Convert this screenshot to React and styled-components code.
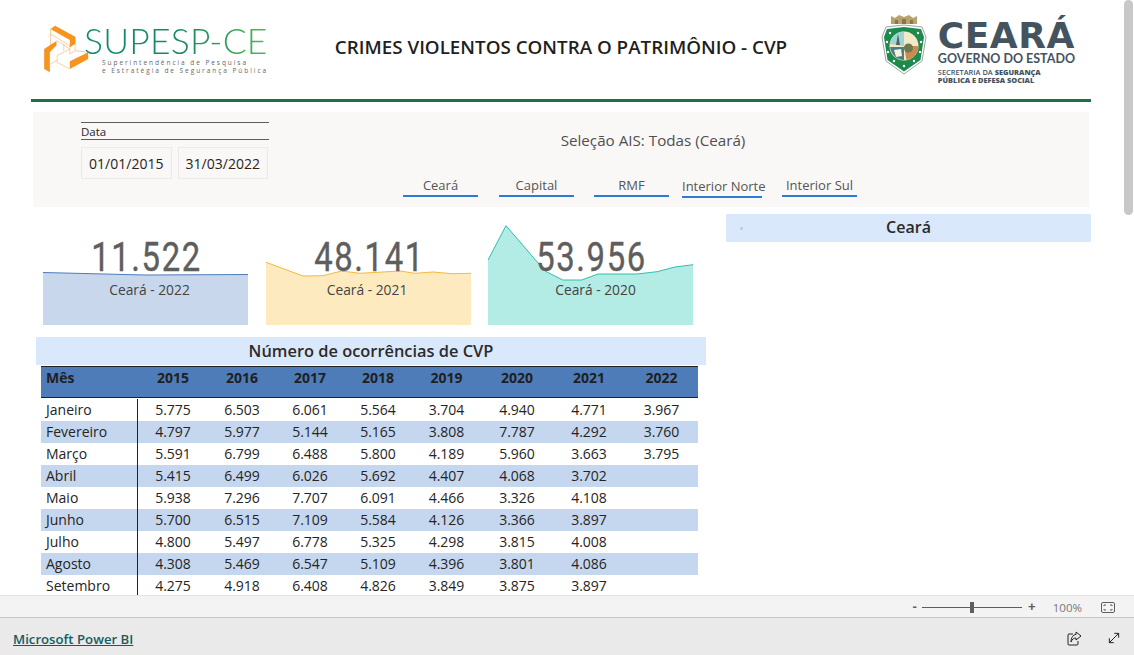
import styled, { createGlobalStyle } from "styled-components";
import { MoveDiagonal } from "lucide-react";

const GlobalStyle = createGlobalStyle`
    html, body, #root {
        margin: 0;
        height: 100%;
    }

    body {
        font-family: "Open Sans", "Noto Sans", sans-serif;
        color: #252423;
        overflow: hidden;
    }

    * {
        box-sizing: border-box;
    }
`;

const Page = styled.div`
    display: flex;
    flex-direction: column;
    height: 100vh;
`;

const ReportView = styled.main`
    position: relative;
    flex: 1;
    min-height: 0;
    overflow: hidden;
    background: #fff;
`;

const ScrollThumb = styled.div`
    position: absolute;
    top: 0;
    right: 1px;
    width: 9px;
    height: 215px;
    border-radius: 5px;
    background: #c8c8c8;
`;

const Report = styled.div`
    width: 1124px;
    padding: 0 33px 0 31px;
`;

const Header = styled.header`
    display: grid;
    grid-template-columns: 1fr 1fr 1fr;
    height: 102px;
    border-bottom: 3px solid #1d7144;
    align-items: center;
`;

const HeaderTitle = styled.h1`
    margin: 0 0 6px;
    font-size: 18.8px;
    font-weight: 600;
    white-space: nowrap;
    justify-self: center;
    color: #1f1f1f;
`;

const SupespLogo = styled.div`
    display: flex;
    align-items: center;
    padding-left: 12px;
    margin-top: -2px;
`;

const SupespText = styled.div`
    display: flex;
    flex-direction: column;
    margin-left: -6px;
`;

const SupespName = styled.span`
    font-family: "Lato", sans-serif;
    font-weight: 300;
    font-size: 35.5px;
    line-height: 37px;
    letter-spacing: 0.2px;
    white-space: nowrap;
    background: linear-gradient(90deg, #0f8a73 0%, #148a5c 55%, #4cb957 100%);
    -webkit-background-clip: text;
    background-clip: text;
    color: transparent;
`;

const SupespSub = styled.span`
    font-size: 6.5px;
    line-height: 8.5px;
    letter-spacing: 1.95px;
    margin-left: 18px;
    white-space: nowrap;
    color: #666;
`;

const CearaLogo = styled.div`
    display: flex;
    justify-self: end;
    align-items: flex-start;
    gap: 11px;
    padding-right: 16px;
    margin-bottom: 1px;
`;

const CearaText = styled.div`
    display: flex;
    flex-direction: column;
    color: #44545f;
`;

const CearaName = styled.span`
    font-family: "DejaVu Sans", sans-serif;
    font-weight: 700;
    font-size: 36px;
    line-height: 33px;
    letter-spacing: 0.5px;
    margin-top: 5px;
`;

const CearaGov = styled.span`
    font-family: "Lato", sans-serif;
    font-weight: 700;
    font-size: 12.5px;
    line-height: 14px;
    white-space: nowrap;
`;

const CearaSub = styled.span`
    font-size: 7.4px;
    line-height: 8px;
    font-weight: 600;
    white-space: nowrap;
    margin-top: ${props => props.$first ? "2px" : "0"};

    & b {
        font-weight: 800;
    }
`;

const FilterPanel = styled.section`
    display: flex;
    height: 95px;
    width: 1056px;
    margin: 10px 0 7px 2px;
    padding: 10px 0 0 48px;
    background: #faf8f6;
`;

const DateSlicer = styled.div`
    width: 188px;
`;

const SlicerLabel = styled.div`
    height: 18px;
    border-top: 1px solid #605e5c;
    border-bottom: 1px solid #605e5c;
    font-size: 11.5px;
    line-height: 18px;
`;

const DateRow = styled.div`
    display: flex;
    gap: 6px;
    margin-top: 7px;
`;

const DateBox = styled.div`
    width: 90.5px;
    height: 32px;
    border: 1px solid #eaeaea;
    font-size: 14px;
    line-height: 32px;
    text-align: center;
    color: #252423;
`;

const Selection = styled.div`
    width: 500px;
    margin-left: 134px;
`;

const SelectionTitle = styled.div`
    margin-top: 8px;
    font-size: 15.2px;
    line-height: 20px;
    text-align: center;
    color: #4f4f4f;
`;

const Tabs = styled.div`
    display: flex;
    margin-top: 26px;
`;

const Tab = styled.div`
    width: ${props => props.$width || 75}px;
    margin-right: ${props => props.$gap || 0}px;
    margin-top: ${props => props.$drop ? "1px" : "0"};
    height: 21px;
    border-bottom: 2px solid #2b7cd3;
    font-size: 13px;
    line-height: 18px;
    text-align: center;
    white-space: nowrap;
    color: #555;
`;

const Columns = styled.div`
    display: flex;
    align-items: flex-start;
`;

const LeftColumn = styled.div`
    width: 675px;
`;

const RightColumn = styled.div`
    width: 365px;
    margin-left: 20px;
`;

const RegionBar = styled.div`
    position: relative;
    height: 28px;
    background: #dae8fc;
    font-size: 16px;
    font-weight: 600;
    line-height: 27px;
    text-align: center;
    color: #2b2b2b;
`;

const RegionDot = styled.span`
    position: absolute;
    left: 14px;
    top: 13px;
    width: 3px;
    height: 3px;
    border-radius: 50%;
    background: #c2c8d2;
`;

const Cards = styled.div`
    display: flex;
    height: 111px;
    padding: 1px 0 0 12px;
`;

const Card = styled.div`
    position: relative;
    width: 205px;
    height: 110px;
    margin-right: ${props => props.$gap}px;
`;

const CardChart = styled.svg`
    display: block;
`;

const CardValue = styled.div`
    position: absolute;
    left: 0;
    right: 0;
    top: 18px;
    font-family: "Roboto", sans-serif;
    font-size: 40px;
    line-height: 50px;
    letter-spacing: 2px;
    text-align: center;
    color: #605e5c;
    -webkit-text-stroke: 0.4px #605e5c;
    transform: translateX(1px) scaleX(0.82);
`;

const CardLabel = styled.div`
    position: absolute;
    left: 0;
    right: 0;
    top: 65px;
    font-size: 13.8px;
    line-height: 19px;
    text-align: center;
    color: #444;
    transform: translateX(${props => props.$shift}px);
`;

const TableTitle = styled.div`
    height: 28px;
    margin: 12px 0 0 5px;
    width: 670px;
    background: #dae8fc;
    font-size: 16.4px;
    font-weight: 600;
    line-height: 27px;
    text-align: center;
    color: #2b2b2b;
`;

const Table = styled.div`
    width: 657px;
    margin: 1px 0 0 10px;
    font-size: 14px;
`;

const COLUMNS = "97px 70px 68px 68px 68px 69px 72px 72px 73px";

const HeadRow = styled.div`
    display: grid;
    grid-template-columns: ${COLUMNS};
    height: 32px;
    margin-bottom: 1px;
    background: #4d7cb8;
    border-top: 1px solid #222;
    border-bottom: 1px solid #222;
    font-weight: 700;
    line-height: 22px;
    color: #1f1f1f;
`;

const Row = styled.div`
    display: grid;
    grid-template-columns: ${COLUMNS};
    height: 22px;
    line-height: 22px;
    background: ${props => props.$striped ? "#c5d7ef" : "#fff"};
    color: #252423;
`;

const MonthCell = styled.div`
    padding-left: 5px;
    border-right: ${props => props.$head ? "0" : "1px solid #222"};
`;

const Cell = styled.div`
    text-align: center;
`;

const StatusBar = styled.div`
    display: flex;
    align-items: center;
    justify-content: flex-end;
    height: 23px;
    padding: 1px 19px 0 0;
    background: #f3f3f3;
    border-top: 1px solid #e3e3e3;
    border-bottom: 1px solid #c8c8c8;
    color: #605e5c;
`;

const ZoomSign = styled.span`
    font-family: "Liberation Sans", sans-serif;
    font-size: 13px;
    font-weight: 700;
    line-height: 20px;
    width: 10px;
    text-align: center;
`;

const ZoomTrack = styled.div`
    position: relative;
    width: 100px;
    height: 1px;
    margin: 0 5px 0 2px;
    background: #605e5c;
`;

const ZoomThumb = styled.span`
    position: absolute;
    left: 48px;
    top: -5px;
    width: 4px;
    height: 11px;
    background: #605e5c;
`;

const ZoomValue = styled.span`
    margin: 0 19px 0 16px;
    font-size: 11.5px;
    color: #777;
`;

const Footer = styled.footer`
    display: flex;
    align-items: center;
    justify-content: space-between;
    height: 37px;
    padding: 4px 12px 0 13px;
    background: #eaeaea;
`;

const PowerBiLink = styled.a`
    font-size: 13.2px;
    font-weight: 600;
    color: #0f5f63;
    text-decoration: underline;
`;

const FooterIcons = styled.div`
    display: flex;
    align-items: center;
    gap: 24px;
    margin-top: -1px;
    color: #252423;
`;

const months = [
    ["Janeiro", "5.775", "6.503", "6.061", "5.564", "3.704", "4.940", "4.771", "3.967"],
    ["Fevereiro", "4.797", "5.977", "5.144", "5.165", "3.808", "7.787", "4.292", "3.760"],
    ["Março", "5.591", "6.799", "6.488", "5.800", "4.189", "5.960", "3.663", "3.795"],
    ["Abril", "5.415", "6.499", "6.026", "5.692", "4.407", "4.068", "3.702", ""],
    ["Maio", "5.938", "7.296", "7.707", "6.091", "4.466", "3.326", "4.108", ""],
    ["Junho", "5.700", "6.515", "7.109", "5.584", "4.126", "3.366", "3.897", ""],
    ["Julho", "4.800", "5.497", "6.778", "5.325", "4.298", "3.815", "4.008", ""],
    ["Agosto", "4.308", "5.469", "6.547", "5.109", "4.396", "3.801", "4.086", ""],
    ["Setembro", "4.275", "4.918", "6.408", "4.826", "3.849", "3.875", "3.897", ""],
];

const years = ["2015", "2016", "2017", "2018", "2019", "2020", "2021", "2022"];

const cards = [
    {
        value: "11.522",
        label: "Ceará - 2022",
        line: "#4d7cb8",
        fill: "#c8d7ec",
        gap: 18,
        shift: 4,
        points: "0,57.5 102,60 205,59.5",
    },
    {
        value: "48.141",
        label: "Ceará - 2021",
        line: "#f5b93f",
        fill: "#fdeabf",
        gap: 17,
        shift: -1.5,
        points: "0,47.3 37,61 57,60.7 75.7,56 94,58.3 134,56 149,58.3 167,57 186,58.7 205,58.3",
    },
    {
        value: "53.956",
        label: "Ceará - 2020",
        line: "#2fbfae",
        fill: "#b3ebe5",
        gap: 0,
        shift: 5,
        points: "0,45 18,10.7 57,56 74.7,65 93.7,65 110,59 149,59 169,56.7 187,52 205,49.7",
    },
];

function KnotIcon() {
    return (
        <svg width="47" height="50" viewBox="40 70 140 150">
            <g fill="none" stroke="#f9b778" strokeWidth="2">
                <path d="M62 85 62 135 M62 100 120 135 120 160 M136 108 136 150 120 160 M82 120 60 135 M82 120 120 145 M82 165 120 145 M82 165 82 185 120 205 M102 130 102 150 M62 190 82 178 M136 150 175 155" />
            </g>
            <path fill="#f7931e" d="M62 85 76 75 136 108 136 130 120 140 120 118Z" />
            <path fill="#f7931e" d="M43 145 60 134 80 122 80 134 60 155 60 215 43 205Z" />
            <path fill="#f7931e" d="M120 182 175 155 175 175 120 205Z" />
        </svg>
    );
}

function CrestIcon() {
    return (
        <svg width="46" height="61" viewBox="0 0 46 61">
            <path fill="#b9a36c" d="M10 10 10 2 14 4 18 1 23 3 28 1 32 4 36 2 36 10Z" />
            <path fill="#8a7748" d="M14 6h3v4h-3zM21 5h4v5h-4zM29 6h3v4h-3z" />
            <path fill="#fff" stroke="#9aa5a0" strokeWidth="1" d="M23 11 41 13 45 23 41 47 23 60 5 47 1 23 5 13Z" />
            <path fill="#1c8a4c" d="M23 13 40 15 43 23 39.5 46 23 57.5 6.5 46 3 23 6 15Z" />
            <circle cx="23" cy="32" r="14.5" fill="#f3e9c6" />
            <path fill="#9ed3d8" d="M9 30a14.500 14.500 0 0 1 14 -12.500v14.500Z" />
            <path fill="#c98b4f" d="M23 32h14.500a14.500 14.500 0 0 1 -12 14.300Z" />
            <path fill="#6a7a50" d="M23 34a4.500 4.500 0 1 1 9 0a4.500 4.500 0 1 1 -9 0Z" />
            <path fill="#4d7f80" d="M9 33h14v13a14.500 14.500 0 0 1 -14 -13Z" />
            <path fill="#f4f1e4" d="M13 36l7 -1 1 7 -6 1Z" />
            <path fill="#55625a" d="M15 31 17 20 19 31Z" />
            <g fill="#fff">
                <circle cx="9" cy="19" r="1.200" />
                <circle cx="6" cy="28" r="1.200" />
                <circle cx="7" cy="38" r="1.200" />
                <circle cx="13" cy="47" r="1.200" />
                <circle cx="23" cy="52" r="1.200" />
                <circle cx="33" cy="47" r="1.200" />
                <circle cx="39" cy="38" r="1.200" />
                <circle cx="40" cy="28" r="1.200" />
                <circle cx="37" cy="19" r="1.200" />
            </g>
        </svg>
    );
}

function FitIcon() {
    return (
        <svg width="14" height="11" viewBox="0 0 14 11" fill="none" stroke="#605e5c">
            <rect x="0.500" y="0.500" width="13" height="10" rx="1.500" />
            <path d="M3 4V3h2M11 4V3H9M3 7v1h2M11 7v1H9" />
        </svg>
    );
}

function ShareIcon() {
    return (
        <svg width="15" height="15" viewBox="0 0 15 15" fill="none" stroke="#252423">
            <path d="M6 3H2a1 1 0 0 0-1 1v9a1 1 0 0 0 1 1h8a1 1 0 0 0 1-1v-3" />
            <path d="M9 1l5 4-5 4V7C7 7 5 8 4 11 4 7 6 3.500 9 3.500Z" />
        </svg>
    );
}

export default function App() {
    return (
        <Page>
            <GlobalStyle />
            <ReportView>
                <Report>
                    <Header>
                        <SupespLogo>
                            <KnotIcon />
                            <SupespText>
                                <SupespName>SUPESP-CE</SupespName>
                                <SupespSub>Superintendência de Pesquisa</SupespSub>
                                <SupespSub>e Estratégia de Segurança Pública</SupespSub>
                            </SupespText>
                        </SupespLogo>
                        <HeaderTitle>CRIMES VIOLENTOS CONTRA O PATRIMÔNIO - CVP</HeaderTitle>
                        <CearaLogo>
                            <CrestIcon />
                            <CearaText>
                                <CearaName>CEARÁ</CearaName>
                                <CearaGov>GOVERNO DO ESTADO</CearaGov>
                                <CearaSub $first>SECRETARIA DA <b>SEGURANÇA</b></CearaSub>
                                <CearaSub><b>PÚBLICA E DEFESA SOCIAL</b></CearaSub>
                            </CearaText>
                        </CearaLogo>
                    </Header>

                    <FilterPanel>
                        <DateSlicer>
                            <SlicerLabel>Data</SlicerLabel>
                            <DateRow>
                                <DateBox>01/01/2015</DateBox>
                                <DateBox>31/03/2022</DateBox>
                            </DateRow>
                        </DateSlicer>
                        <Selection>
                            <SelectionTitle>Seleção AIS: Todas (Ceará)</SelectionTitle>
                            <Tabs>
                                <Tab $gap={21}>Ceará</Tab>
                                <Tab $gap={20}>Capital</Tab>
                                <Tab $gap={13}>RMF</Tab>
                                <Tab $width={80} $gap={20} $drop>Interior Norte</Tab>
                                <Tab>Interior Sul</Tab>
                            </Tabs>
                        </Selection>
                    </FilterPanel>

                    <Columns>
                        <LeftColumn>
                            <Cards>
                                {cards.map(card => (
                                    <Card key={card.label} $gap={card.gap}>
                                        <CardChart width="205" height="110" viewBox="0 0 205 110">
                                            <polygon points={`${card.points} 205,110 0,110`} fill={card.fill} />
                                            <polyline points={card.points} fill="none" stroke={card.line} strokeWidth="1" />
                                        </CardChart>
                                        <CardValue>{card.value}</CardValue>
                                        <CardLabel $shift={card.shift}>{card.label}</CardLabel>
                                    </Card>
                                ))}
                            </Cards>

                            <TableTitle>Número de ocorrências de CVP</TableTitle>
                            <Table>
                                <HeadRow>
                                    <MonthCell $head>Mês</MonthCell>
                                    {years.map(year => <Cell key={year}>{year}</Cell>)}
                                </HeadRow>
                                {months.map(([month, ...values], i) => (
                                    <Row key={month} $striped={i % 2 === 1}>
                                        <MonthCell>{month}</MonthCell>
                                        {values.map((value, j) => <Cell key={j}>{value}</Cell>)}
                                    </Row>
                                ))}
                            </Table>
                        </LeftColumn>
                        <RightColumn>
                            <RegionBar>
                                <RegionDot />
                                Ceará
                            </RegionBar>
                        </RightColumn>
                    </Columns>
                </Report>
                <ScrollThumb />
            </ReportView>

            <StatusBar>
                <ZoomSign>-</ZoomSign>
                <ZoomTrack>
                    <ZoomThumb />
                </ZoomTrack>
                <ZoomSign>+</ZoomSign>
                <ZoomValue>100%</ZoomValue>
                <FitIcon />
            </StatusBar>

            <Footer>
                <PowerBiLink href="#">Microsoft Power BI</PowerBiLink>
                <FooterIcons>
                    <ShareIcon />
                    <MoveDiagonal size={16} strokeWidth={1.5} />
                </FooterIcons>
            </Footer>
        </Page>
    );
}
